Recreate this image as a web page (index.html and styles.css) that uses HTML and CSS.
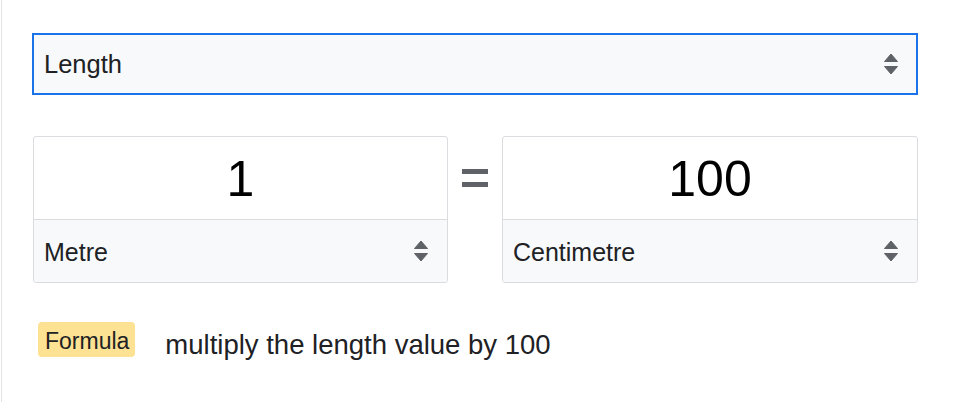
FILE: index.html
```html
<!DOCTYPE html>
<html lang="en">
<head>
<meta charset="utf-8">
<title>Unit converter</title>
<link rel="stylesheet" href="styles.css">
</head>
<body>
<div class="card">
  <div class="select select-main">
    <span class="select-label">Length</span>
    <svg class="arrows" width="14" height="22" viewBox="0 0 14 22"><path d="M0.5 8.5 L7 1 L13.5 8.5 Z M0.5 13.5 L13.5 13.5 L7 21 Z" fill="#5f6368" stroke="#5f6368" stroke-linejoin="round" stroke-width="1"/></svg>
  </div>
  <div class="converter">
    <div class="unit-box">
      <div class="unit-value">1</div>
      <div class="select select-unit">
        <span class="select-label">Metre</span>
        <svg class="arrows" width="14" height="22" viewBox="0 0 14 22"><path d="M0.5 8.5 L7 1 L13.5 8.5 Z M0.5 13.5 L13.5 13.5 L7 21 Z" fill="#5f6368" stroke="#5f6368" stroke-linejoin="round" stroke-width="1"/></svg>
      </div>
    </div>
    <div class="equals"><span class="bar"></span><span class="bar"></span></div>
    <div class="unit-box">
      <div class="unit-value">100</div>
      <div class="select select-unit">
        <span class="select-label">Centimetre</span>
        <svg class="arrows" width="14" height="22" viewBox="0 0 14 22"><path d="M0.5 8.5 L7 1 L13.5 8.5 Z M0.5 13.5 L13.5 13.5 L7 21 Z" fill="#5f6368" stroke="#5f6368" stroke-linejoin="round" stroke-width="1"/></svg>
      </div>
    </div>
  </div>
  <div class="formula">
    <span class="badge">Formula</span>
    <span class="formula-text">multiply the length value by 100</span>
  </div>
</div>
</body>
</html>
```
FILE: styles.css
```css
* { box-sizing: border-box; }
html, body { margin: 0; padding: 0; background: #fff; }
body {
  font-family: "Liberation Sans", Arial, sans-serif;
  color: #202124;
}
.card {
  margin-left: 1px;
  border-left: 1px solid #e4e4e4;
  height: 402px;
  padding: 33px 46px 0 30px;
}
.select {
  display: flex;
  align-items: center;
  justify-content: space-between;
  background: #f8f9fa;
}
.select-label { font-size: 25px; line-height: 1; padding-top: 2px; }
.select-main {
  height: 62px;
  border: 2px solid #1a73e8;
  padding: 0 18px 0 10px;
}
.select-main .select-label { font-size: 25.5px; }
.converter {
  display: flex;
  align-items: flex-start;
  margin-top: 41px;
  margin-left: 1px;
}
.unit-box {
  width: 415px;
  height: 147px;
  border: 1px solid #dadce0;
  border-radius: 3px;
  overflow: hidden;
  display: flex;
  flex-direction: column;
}
.unit-box:last-child { width: 416px; }
.unit-value {
  height: 83px;
  display: flex;
  align-items: center;
  justify-content: center;
  font-size: 50px;
  color: #000;
  border-bottom: 1px solid #dadce0;
  padding-top: 2px;
}
.select-unit {
  flex: 1;
  padding: 0 19px 0 10px;
}
.equals {
  width: 54px;
  height: 84px;
  display: flex;
  flex-direction: column;
  align-items: center;
  justify-content: center;
  gap: 8px;
}
.bar {
  display: block;
  width: 26px;
  height: 5px;
  background: #5f6368;
}
.formula {
  display: flex;
  align-items: flex-start;
  margin-top: 39px;
  padding-left: 6px;
}
.badge {
  display: inline-flex;
  align-items: center;
  height: 35px;
  padding: 4px 6px 0 7px;
  background: #fde293;
  border-radius: 4px;
  font-size: 23px;
  color: #202124;
}
.formula-text {
  margin-left: 30px;
  font-size: 27.5px;
  line-height: 1;
  padding-top: 9px;
}
```
